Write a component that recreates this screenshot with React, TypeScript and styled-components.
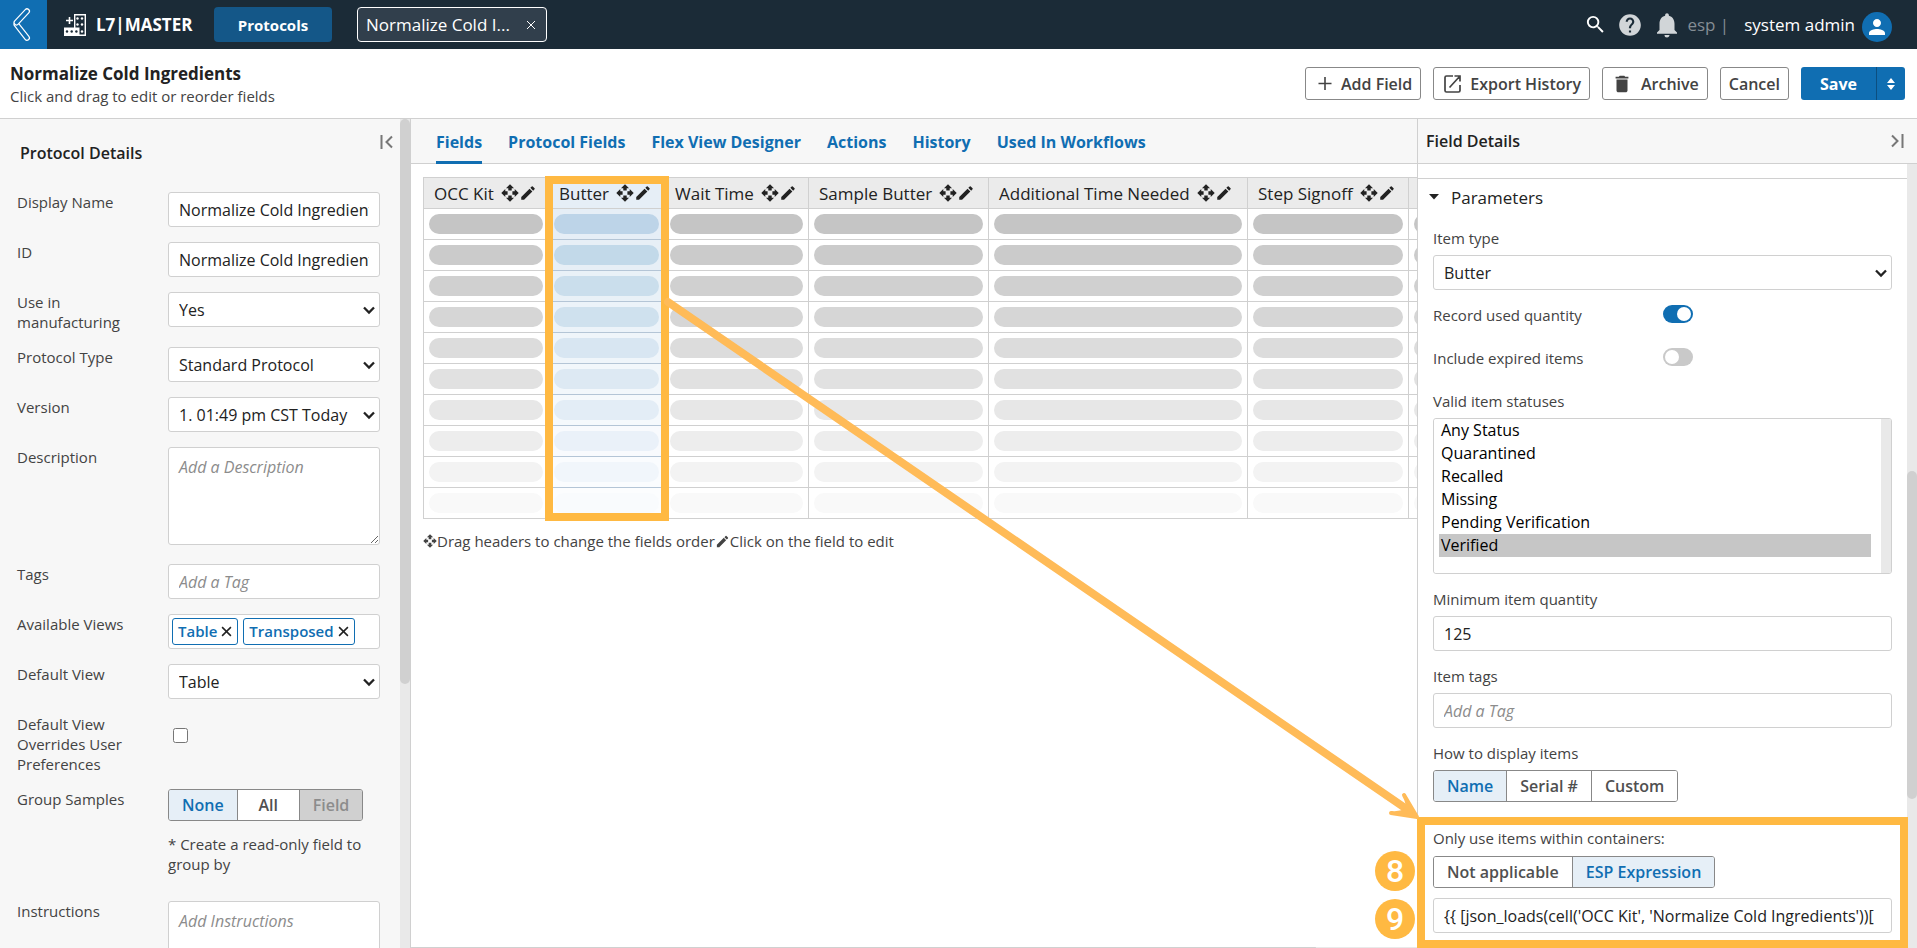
import React from "react";
import styled, { createGlobalStyle } from "styled-components";
import {
  MdSearch,
  MdHelp,
  MdNotifications,
  MdPerson,
  MdDelete,
  MdEdit,
} from "react-icons/md";

const c = {
  blue: "#106eb2",
  navy: "#1b2b37",
  line: "#d0d0d0",
  text: "#222222",
  label: "#434343",
  panel: "#f7f7f7",
  mark: "#ffb942",
  arrow: "#ffbb58",
};

const GlobalStyle = createGlobalStyle`
  *, *::before, *::after { box-sizing: border-box; }
  body { margin: 0; }
  body, button, input, select, textarea {
    font-family: "Open Sans", "Noto Sans", sans-serif;
    color: ${c.text};
  }
  h1, h2, p { margin: 0; }
  button { cursor: pointer; padding: 0; }
`;

/* ---------- shell ---------- */

const Page = styled.div`
  position: relative;
  display: flex;
  flex-direction: column;
  height: 100vh;
  overflow: hidden;
  background: #fff;
  font-size: 16px;
`;

const TopBar = styled.header`
  display: flex;
  align-items: center;
  flex: none;
  height: 49px;
  padding-right: 25px;
  background: ${c.navy};
  color: #fff;
`;

const BackButton = styled.button`
  width: 47px;
  height: 49px;
  border: 0;
  background: ${c.blue};
`;

const Brand = styled.div`
  display: flex;
  align-items: center;
  gap: 10px;
  width: 167px;
  padding-left: 17px;
  font-size: 17px;
  font-weight: 700;
  white-space: nowrap;
`;

const NavButton = styled.button`
  width: 118px;
  height: 35px;
  border: 0;
  border-radius: 4px;
  background: #145788;
  color: #fff;
  font-size: 15px;
  font-weight: 700;
`;

const OpenTab = styled.div`
  display: flex;
  align-items: center;
  justify-content: space-between;
  width: 190px;
  height: 35px;
  margin-left: 25px;
  padding: 0 10px 0 8px;
  border: 1px solid #fff;
  border-radius: 4px;
  background: #313f4c;
  font-size: 17px;
  white-space: nowrap;
`;

const PlainButton = styled.button`
  display: flex;
  align-items: center;
  justify-content: center;
  border: 0;
  background: none;
  color: inherit;
`;

const TopTools = styled.div`
  display: flex;
  align-items: center;
  margin-left: auto;
  font-size: 17px;
`;

const ToolIcon = styled(PlainButton)<{ $dim?: boolean }>`
  min-width: 26px;
  margin-right: 9px;
  color: ${(p) => (p.$dim ? "#d1d5d8" : "#fff")};
`;

const Org = styled.span`
  margin: 0 15px 0 -4px;
  color: #848d94;
`;

const Avatar = styled.button`
  display: flex;
  align-items: center;
  justify-content: center;
  width: 30px;
  height: 30px;
  margin: 4px 0 0 7px;
  border: 0;
  border-radius: 50%;
  background: ${c.blue};
  color: #fff;
`;

const PageHeader = styled.div`
  display: flex;
  align-items: center;
  justify-content: space-between;
  flex: none;
  height: 70px;
  padding: 0 12px 0 10px;
  border-bottom: 1px solid ${c.line};
`;

const PageTitle = styled.h1`
  padding-top: 2px;
  font-size: 17px;
  font-weight: 700;
  line-height: 22px;
`;

const PageHint = styled.p`
  font-size: 15px;
  line-height: 22px;
  color: ${c.label};
`;

const Actions = styled.div`
  display: flex;
  gap: 12px;
`;

const ActionButton = styled.button`
  display: flex;
  align-items: center;
  gap: 8px;
  height: 33px;
  padding: 0 8px;
  border: 1px solid #888;
  border-radius: 3px;
  background: #fff;
  color: ${c.label};
  font-size: 16px;
  font-weight: 600;
  white-space: nowrap;
`;

const SaveGroup = styled.div`
  display: flex;
  border-radius: 3px;
  overflow: hidden;
`;

const SaveButton = styled.button<{ $narrow?: boolean }>`
  width: ${(p) => (p.$narrow ? 29 : 75)}px;
  height: 33px;
  border: 0;
  border-left: ${(p) => (p.$narrow ? "1px solid #0c4f80" : "0")};
  background: ${c.blue};
  color: #fff;
  font-size: 16px;
  font-weight: 700;
`;

const Body = styled.div`
  display: flex;
  flex: 1;
  min-height: 0;
`;

/* ---------- scroll track ---------- */

const Track = styled.div`
  display: flex;
  flex-direction: column;
  flex: none;
  width: 10px;
  background: #e9e9e9;
`;

const Gap = styled.div<{ $part: number }>`
  flex: ${(p) => p.$part};
`;

const Thumb = styled.div<{ $part: number }>`
  flex: ${(p) => p.$part};
  border-radius: 5px;
  background: ${c.line};
`;

/* ---------- form parts ---------- */

const controlBox = `
  width: 100%;
  border: 1px solid ${c.line};
  border-radius: 3px;
  background-color: #fff;
  font-size: 16px;
  outline: 0;
`;

const TextInput = styled.input`
  ${controlBox}
  display: block;
  height: 35px;
  padding: 0 10px;
  &::placeholder { color: #8c8c8c; font-style: italic; }
`;

const TextArea = styled.textarea`
  ${controlBox}
  display: block;
  height: 98px;
  margin-bottom: 4px;
  padding: 8px 10px;
  &::placeholder { color: #8c8c8c; font-style: italic; }
`;

const SelectWrap = styled.div`
  position: relative;
  svg {
    position: absolute;
    right: 5px;
    top: 12px;
    pointer-events: none;
  }
`;

const SelectBox = styled.select`
  ${controlBox}
  display: block;
  appearance: none;
  height: 35px;
  padding: 0 20px 0 10px;
`;

const Select = ({ id, value }: { id: string; value: string }) => (
  <SelectWrap>
    <SelectBox id={id} defaultValue={value}>
      <option>{value}</option>
    </SelectBox>
    <svg width="12" height="12" viewBox="0 0 12 12" fill="none">
      <path d="M1 3.500 6 8.500l5-5" stroke="#222" strokeWidth="2.300" />
    </svg>
  </SelectWrap>
);

const ChipBox = styled.div`
  display: flex;
  gap: 5px;
  height: 35px;
  padding: 3px;
  border: 1px solid ${c.line};
  border-radius: 3px;
  background: #fff;
`;

const Chip = styled.span`
  display: flex;
  align-items: center;
  gap: 4px;
  height: 27px;
  padding: 0 5px 1px;
  border: 1px solid ${c.blue};
  border-radius: 3px;
  color: ${c.blue};
  font-size: 15px;
  font-weight: 600;
`;

const ChipClose = styled(PlainButton)`
  color: #222;
`;

const Segments = styled.div`
  display: inline-flex;
  height: 32px;
  border: 1px solid #888;
  border-radius: 3px;
  overflow: hidden;
`;

const Segment = styled.button<{ $on?: boolean }>`
  min-width: 62px;
  padding: 0 13px;
  border: 0;
  background: ${(p) => (p.$on ? "#e6eff7" : "#fff")};
  color: ${(p) => (p.$on ? c.blue : "#505050")};
  font-size: 16px;
  font-weight: 600;
  white-space: nowrap;
  & + & { border-left: 1px solid #888; }
  &:disabled { background: ${c.line}; color: #8c8c8c; }
`;

/* ---------- left panel ---------- */

const LeftPanel = styled.aside`
  display: flex;
  flex: none;
  width: 411px;
  border-right: 1px solid ${c.line};
  background: ${c.panel};
`;

const LeftContent = styled.div`
  flex: 1;
  min-width: 0;
  padding: 16px 6px 0 17px;
  overflow: hidden;
`;

const LeftHead = styled.div`
  display: flex;
  align-items: flex-start;
  justify-content: space-between;
  height: 57px;
  padding-left: 3px;
`;

const PanelTitle = styled.h2<{ $drop?: boolean }>`
  padding-top: ${(p) => (p.$drop ? 7 : 0)}px;
  font-size: 16px;
  font-weight: 600;
  line-height: 22px;
`;

const DetailsForm = styled.form`
  display: flex;
  flex-direction: column;
  gap: 15px;
  padding-right: 14px;
`;

const Row = styled.div`
  display: grid;
  grid-template-columns: 120px minmax(0, 1fr);
  column-gap: 31px;
`;

const Label = styled.label`
  display: block;
  font-size: 15px;
  line-height: 20px;
  color: ${c.label};
`;

const Tick = styled.input`
  width: 15px;
  height: 15px;
  margin: 14px 0 0 5px;
`;

const Note = styled.p`
  margin: 13px 0 12px;
  font-size: 15px;
  line-height: 20px;
  color: ${c.label};
`;

/* ---------- centre ---------- */

const Center = styled.main`
  display: flex;
  flex-direction: column;
  flex: 1;
  min-width: 0;
  overflow: hidden;
`;

const TabBar = styled.nav`
  display: flex;
  flex: none;
  gap: 26px;
  height: 45px;
  padding-left: 25px;
  border-bottom: 1px solid ${c.line};
  background: ${c.panel};
`;

const Tab = styled.a<{ $on?: boolean }>`
  height: 45px;
  border-bottom: 3px solid ${(p) => (p.$on ? c.blue : "transparent")};
  color: ${c.blue};
  font-size: 16px;
  font-weight: 700;
  line-height: 46px;
  text-decoration: none;
  white-space: nowrap;
`;

const Canvas = styled.section`
  flex: 1;
  padding: 13px 0 0 12px;
  overflow: hidden;
`;

const TableWrap = styled.div`
  position: relative;
`;

const FieldTable = styled.table`
  table-layout: fixed;
  width: 1185px;
  border-collapse: collapse;
`;

const HeadCell = styled.th<{ $active?: boolean }>`
  height: 31px;
  padding: 0 0 0 10px;
  border: 1px solid ${c.line};
  background: ${(p) => (p.$active ? "#e6eef6" : "#ebebeb")};
  font-size: 17px;
  font-weight: 400;
  text-align: left;
  white-space: nowrap;
`;

const HeadContent = styled.span`
  display: flex;
  align-items: center;
  svg:first-of-type { margin-left: 7px; }
`;

const Cell = styled.td<{ $bg?: string }>`
  height: 31px;
  padding: 0 5px;
  border: 1px solid ${(p) => (p.$bg ? "#b4c5d6" : c.line)};
  border-left-color: ${c.line};
  border-right-color: ${c.line};
  background: ${(p) => p.$bg || "#fff"};
`;

const Pill = styled.div<{ $color: string }>`
  height: 20px;
  border-radius: 10px;
  background: ${(p) => p.$color};
`;

const ColumnMark = styled.div`
  position: absolute;
  left: 122px;
  top: -1px;
  width: 124px;
  height: 345px;
  border: 8px solid ${c.mark};
`;

const Legend = styled.p`
  display: flex;
  align-items: center;
  margin-top: 11px;
  font-size: 15px;
  line-height: 22px;
  color: ${c.label};
`;

const BottomRule = styled.div`
  display: flex;
  flex: none;
  height: 1px;
  background: #e9e9e9;
`;

/* ---------- right panel ---------- */

const RightPanel = styled.aside`
  display: flex;
  flex-direction: column;
  flex: none;
  width: 500px;
  border-left: 1px solid ${c.line};
  background: #fff;
`;

const RightHead = styled.div`
  display: flex;
  align-items: center;
  justify-content: space-between;
  flex: none;
  height: 45px;
  padding: 0 13px 0 8px;
  border-bottom: 1px solid ${c.line};
  background: ${c.panel};
`;

const RightBody = styled.div`
  display: flex;
  flex: 1;
  min-height: 0;
`;

const RightContent = styled.div`
  flex: 1;
  min-width: 0;
  padding-top: 14px;
  overflow: hidden;
`;

const SectionToggle = styled.button`
  display: flex;
  align-items: center;
  gap: 12px;
  width: 100%;
  height: 37px;
  padding-left: 11px;
  border: 0;
  border-top: 1px solid ${c.line};
  background: none;
  font-size: 17px;
`;

const ParamForm = styled.form`
  display: flex;
  flex-direction: column;
  gap: 15px;
  padding: 13px 15px 0;
`;

const Field = styled.div`
  display: flex;
  flex-direction: column;
  align-items: flex-start;
  gap: 7px;
  & > ${SelectWrap} { width: 100%; }
`;

const SwitchRow = styled.div`
  display: flex;
  align-items: flex-start;
  margin-bottom: 8px;
  & > ${Label} { width: 230px; }
`;

const Switch = styled.input`
  appearance: none;
  width: 30px;
  height: 18px;
  margin: 0;
  padding: 2px;
  border-radius: 9px;
  background: #c9c9c9;
  &::before {
    content: "";
    display: block;
    width: 14px;
    height: 14px;
    border-radius: 50%;
    background: #fff;
  }
  &:checked { background: ${c.blue}; }
  &:checked::before { margin-left: 12px; }
`;

const ListFrame = styled.div`
  display: flex;
  width: 100%;
  height: 156px;
  border: 1px solid ${c.line};
  border-radius: 3px;
  overflow: hidden;
`;

const ListBox = styled.select`
  flex: 1;
  padding: 0 10px 0 5px;
  border: 0;
  background: #fff;
  font-size: 16px;
  outline: 0;
  overflow: hidden;
  option {
    height: 23px;
    padding: 0 2px;
    color: #000;
  }
  option:checked {
    background: #c6c6c6 linear-gradient(#c6c6c6, #c6c6c6);
    color: #000;
  }
`;

const ContainerField = styled(Field)`
  gap: 8px;
  margin-top: 11px;
  ${TextInput} { margin-top: 2px; }
`;

/* ---------- callouts over the page ---------- */

const PanelMark = styled.div`
  position: absolute;
  right: 9px;
  top: 817px;
  width: 491px;
  height: 131px;
  border: 8px solid ${c.mark};
`;

const Step = styled.div<{ $top: number }>`
  position: absolute;
  right: 502px;
  top: ${(p) => p.$top}px;
  width: 40px;
  height: 40px;
  border-radius: 50%;
  background: ${c.mark};
  color: #fff;
  font-family: Roboto, sans-serif;
  font-size: 32px;
  font-weight: 500;
  line-height: 40px;
  text-align: center;
`;

const ArrowLayer = styled.svg`
  position: absolute;
  left: 0;
  top: 0;
  pointer-events: none;
`;

/* ---------- icons ---------- */

const BackIcon = () => (
  <svg width="47" height="49" viewBox="0 0 47 49" fill="none" strokeLinecap="round">
    <path d="M16.500 24.500 27 37.800" stroke="#fff" strokeWidth="6" />
    <path d="M16.500 24.500 27 37.800" stroke={c.blue} strokeWidth="3.600" />
    <path d="M27 11.300 16.500 22.500" stroke="#fff" strokeWidth="6" />
    <path d="M27 11.300 16.500 22.500" stroke={c.blue} strokeWidth="3.600" />
  </svg>
);

const LogoIcon = () => (
  <svg width="22" height="22" viewBox="0 0 22 22">
    <path d="M10.700.700h10.600v20.600H10.700z" fill="none" stroke="#fff" strokeWidth="1.400" />
    <path d="M0 13.500h15.500V22H0z" fill="#fff" />
    <path d="M5.500 3v7M2 6.500h7" stroke="#fff" strokeWidth="1.600" />
    <g fill="#fff">
      <circle cx="13.500" cy="4.500" r="1.200" />
      <circle cx="18" cy="4.500" r="1.200" />
      <circle cx="13.500" cy="10.500" r="1.200" />
      <circle cx="18" cy="10.500" r="1.200" />
      <circle cx="18" cy="17.500" r="1.200" />
    </g>
    <g fill={c.navy}>
      <circle cx="3" cy="17.500" r="1.200" />
      <circle cx="7.700" cy="17.500" r="1.200" />
      <circle cx="12.400" cy="17.500" r="1.200" />
    </g>
  </svg>
);

const MoveIcon = ({ size = 18 }: { size?: number }) => (
  <svg width={size} height={size} viewBox="0 0 18 18" fill="currentColor">
    {[0, 90, 180, 270].map((r) => (
      <path key={r} transform={`rotate(${r} 9 9)`} d="M9 .3 13 4.300H10.700V6.600H7.300V4.300H5z" />
    ))}
  </svg>
);

const CloseIcon = ({ size = 10, weight = 1.4 }: { size?: number; weight?: number }) => (
  <svg width={size} height={size} viewBox="0 0 10 10" stroke="currentColor" strokeWidth={weight}>
    <path d="M1 1l8 8M9 1 1 9" />
  </svg>
);

const PlusIcon = () => (
  <svg width="19" height="14" viewBox="0 0 19 14" stroke="currentColor" strokeWidth="1.600">
    <path d="M11 0v13M4.500 6.500h13" />
  </svg>
);

const ExportIcon = () => (
  <svg width="20" height="18" viewBox="0 0 20 18" fill="none" stroke="currentColor" strokeWidth="1.700">
    <path d="M11 1H4.500Q3 1 3 2.500v13Q3 17 4.500 17h12q1.500 0 1.500-1.500V10M12.500 1H18v5.500M18 1 7.500 12.500" />
  </svg>
);

const CollapseIcon = ({ flip }: { flip?: boolean }) => (
  <svg width="14" height="14" viewBox="0 0 14 14" fill="none" stroke="#777" strokeWidth="2">
    <path d={flip ? "M2 1.500 7.500 7 2 12.500M12.500 0v14" : "M12 1.500 6.500 7l5.500 5.500M1.500 0v14"} />
  </svg>
);

/* ---------- data ---------- */

const tabs = ["Fields", "Protocol Fields", "Flex View Designer", "Actions", "History", "Used In Workflows"];

const columns = [
  { name: "OCC Kit", width: 125 },
  { name: "Butter", width: 116 },
  { name: "Wait Time", width: 144 },
  { name: "Sample Butter", width: 180 },
  { name: "Additional Time Needed", width: 259 },
  { name: "Step Signoff", width: 161 },
  { name: "", width: 200 },
];

const shades = [
  { grey: "#c5c5c5", blue: "#bdd4e8", bg: "#e6eef6" },
  { grey: "#cbcbcb", blue: "#c2d9e9", bg: "#e7eff6" },
  { grey: "#d0d0d0", blue: "#cadeec", bg: "#e9f1f7" },
  { grey: "#d6d6d6", blue: "#cfe1ee", bg: "#ecf3f9" },
  { grey: "#dcdcdc", blue: "#d8e6f2", bg: "#eff5fa" },
  { grey: "#e1e1e1", blue: "#dde9f3", bg: "#f2f7fb" },
  { grey: "#e7e7e7", blue: "#e3edf6", bg: "#f5f9fc" },
  { grey: "#ededed", blue: "#eaf1f9", bg: "#f8fafd" },
  { grey: "#f3f3f3", blue: "#f1f6fb", bg: "#fafcfe" },
  { grey: "#f9f9f9", blue: "#f9fbfd", bg: "#fcfdfe" },
];

const statuses = ["Any Status", "Quarantined", "Recalled", "Missing", "Pending Verification", "Verified"];

/* ---------- page ---------- */

export default function App() {
  return (
    <Page>
      <GlobalStyle />
      <TopBar>
        <BackButton aria-label="Back"><BackIcon /></BackButton>
        <Brand><LogoIcon />L7|MASTER</Brand>
        <NavButton>Protocols</NavButton>
        <OpenTab>
          Normalize Cold I...
          <PlainButton aria-label="Close tab"><CloseIcon weight={1} /></PlainButton>
        </OpenTab>
        <TopTools>
          <ToolIcon aria-label="Search"><MdSearch size={23} /></ToolIcon>
          <ToolIcon $dim aria-label="Help"><MdHelp size={26} /></ToolIcon>
          <ToolIcon $dim aria-label="Notifications"><MdNotifications size={30} /></ToolIcon>
          <Org>esp |</Org>
          system admin
          <Avatar aria-label="Account"><MdPerson size={24} /></Avatar>
        </TopTools>
      </TopBar>

      <PageHeader>
        <div>
          <PageTitle>Normalize Cold Ingredients</PageTitle>
          <PageHint>Click and drag to edit or reorder fields</PageHint>
        </div>
        <Actions>
          <ActionButton><PlusIcon />Add Field</ActionButton>
          <ActionButton><ExportIcon />Export History</ActionButton>
          <ActionButton><MdDelete size={22} />Archive</ActionButton>
          <ActionButton>Cancel</ActionButton>
          <SaveGroup>
            <SaveButton>Save</SaveButton>
            <SaveButton $narrow aria-label="More save options">
              <svg width="8" height="12" viewBox="0 0 8 12" fill="#fff">
                <path d="M4 0l4 5H0zM4 12l4-5H0z" />
              </svg>
            </SaveButton>
          </SaveGroup>
        </Actions>
      </PageHeader>

      <Body>
        <LeftPanel>
          <LeftContent>
            <LeftHead>
              <PanelTitle $drop>Protocol Details</PanelTitle>
              <PlainButton aria-label="Collapse protocol details"><CollapseIcon /></PlainButton>
            </LeftHead>
            <DetailsForm>
              <Row>
                <Label htmlFor="name">Display Name</Label>
                <TextInput id="name" defaultValue="Normalize Cold Ingredients" />
              </Row>
              <Row>
                <Label htmlFor="pid">ID</Label>
                <TextInput id="pid" defaultValue="Normalize Cold Ingredients" />
              </Row>
              <Row>
                <Label htmlFor="mfg">Use in manufacturing</Label>
                <Select id="mfg" value="Yes" />
              </Row>
              <Row>
                <Label htmlFor="ptype">Protocol Type</Label>
                <Select id="ptype" value="Standard Protocol" />
              </Row>
              <Row>
                <Label htmlFor="version">Version</Label>
                <Select id="version" value="1. 01:49 pm CST Today" />
              </Row>
              <Row>
                <Label htmlFor="desc">Description</Label>
                <TextArea id="desc" placeholder="Add a Description" />
              </Row>
              <Row>
                <Label htmlFor="tags">Tags</Label>
                <TextInput id="tags" placeholder="Add a Tag" />
              </Row>
              <Row>
                <Label as="span">Available Views</Label>
                <ChipBox>
                  {["Table", "Transposed"].map((v) => (
                    <Chip key={v}>
                      {v}
                      <ChipClose type="button" aria-label={`Remove ${v}`}><CloseIcon size={11} /></ChipClose>
                    </Chip>
                  ))}
                </ChipBox>
              </Row>
              <Row>
                <Label htmlFor="dview">Default View</Label>
                <Select id="dview" value="Table" />
              </Row>
              <Row>
                <Label htmlFor="override">Default View Overrides User Preferences</Label>
                <Tick id="override" type="checkbox" />
              </Row>
              <Row>
                <Label as="span">Group Samples</Label>
                <div>
                  <Segments>
                    <Segment type="button" $on>None</Segment>
                    <Segment type="button">All</Segment>
                    <Segment type="button" disabled>Field</Segment>
                  </Segments>
                  <Note>* Create a read-only field to group by</Note>
                </div>
              </Row>
              <Row>
                <Label htmlFor="instr">Instructions</Label>
                <TextArea id="instr" placeholder="Add Instructions" />
              </Row>
            </DetailsForm>
          </LeftContent>
          <Track><Thumb $part={565} /><Gap $part={264} /></Track>
        </LeftPanel>

        <Center>
          <TabBar>
            {tabs.map((t, i) => (
              <Tab key={t} href="#" $on={i === 0}>{t}</Tab>
            ))}
          </TabBar>
          <Canvas>
            <TableWrap>
              <FieldTable>
                <colgroup>
                  {columns.map((col) => <col key={col.name} width={col.width} />)}
                </colgroup>
                <thead>
                  <tr>
                    {columns.map((col, i) => (
                      <HeadCell key={col.name} $active={i === 1}>
                        {col.name && (
                          <HeadContent>{col.name}<MoveIcon /><MdEdit size={18} /></HeadContent>
                        )}
                      </HeadCell>
                    ))}
                  </tr>
                </thead>
                <tbody>
                  {shades.map((s) => (
                    <tr key={s.grey}>
                      {columns.map((col, i) => (
                        <Cell key={col.name} $bg={i === 1 ? s.bg : undefined}>
                          <Pill $color={i === 1 ? s.blue : s.grey} />
                        </Cell>
                      ))}
                    </tr>
                  ))}
                </tbody>
              </FieldTable>
              <ColumnMark />
            </TableWrap>
            <Legend>
              <MoveIcon size={14} />Drag headers to change the fields order
              <MdEdit size={15} />Click on the field to edit
            </Legend>
          </Canvas>
          <BottomRule><Thumb $part={9} /><Gap $part={1} /></BottomRule>
        </Center>

        <RightPanel>
          <RightHead>
            <PanelTitle>Field Details</PanelTitle>
            <PlainButton aria-label="Collapse field details"><CollapseIcon flip /></PlainButton>
          </RightHead>
          <RightBody>
            <RightContent>
              <SectionToggle>
                <svg width="10" height="6" viewBox="0 0 10 6" fill="#222"><path d="M0 0h10L5 5.500z" /></svg>
                Parameters
              </SectionToggle>
              <ParamForm>
                <Field>
                  <Label htmlFor="itype">Item type</Label>
                  <Select id="itype" value="Butter" />
                </Field>
                <SwitchRow>
                  <Label htmlFor="record">Record used quantity</Label>
                  <Switch id="record" type="checkbox" role="switch" defaultChecked />
                </SwitchRow>
                <SwitchRow>
                  <Label htmlFor="expired">Include expired items</Label>
                  <Switch id="expired" type="checkbox" role="switch" />
                </SwitchRow>
                <Field>
                  <Label htmlFor="statuses">Valid item statuses</Label>
                  <ListFrame>
                    <ListBox id="statuses" multiple defaultValue={["Verified"]}>
                      {statuses.map((s) => <option key={s}>{s}</option>)}
                    </ListBox>
                    <Track />
                  </ListFrame>
                </Field>
                <Field>
                  <Label htmlFor="minq">Minimum item quantity</Label>
                  <TextInput id="minq" defaultValue="125" />
                </Field>
                <Field>
                  <Label htmlFor="itags">Item tags</Label>
                  <TextInput id="itags" placeholder="Add a Tag" />
                </Field>
                <Field>
                  <Label as="span">How to display items</Label>
                  <Segments>
                    <Segment type="button" $on>Name</Segment>
                    <Segment type="button">Serial #</Segment>
                    <Segment type="button">Custom</Segment>
                  </Segments>
                </Field>
                <ContainerField>
                  <Label htmlFor="expr">Only use items within containers:</Label>
                  <Segments>
                    <Segment type="button">Not applicable</Segment>
                    <Segment type="button" $on>ESP Expression</Segment>
                  </Segments>
                  <TextInput
                    id="expr"
                    defaultValue="{{ [json_loads(cell('OCC Kit', 'Normalize Cold Ingredients'))["
                  />
                </ContainerField>
              </ParamForm>
            </RightContent>
            <Track><Gap $part={307} /><Thumb $part={328} /><Gap $part={149} /></Track>
          </RightBody>
        </RightPanel>
      </Body>

      <PanelMark />
      <Step $top={851}>8</Step>
      <Step $top={899}>9</Step>
      <ArrowLayer
        width="1424"
        height="824"
        viewBox="0 0 1424 824"
        fill="none"
        stroke={c.arrow}
        strokeLinecap="round"
        strokeLinejoin="round"
      >
        <path d="M668 302 1408 810" strokeWidth="8" />
        <path d="M1404 795 1417 817 1391 813Q1402 814 1407 809 1409 804 1404 795z" strokeWidth="4" fill={c.arrow} />
      </ArrowLayer>
    </Page>
  );
}
